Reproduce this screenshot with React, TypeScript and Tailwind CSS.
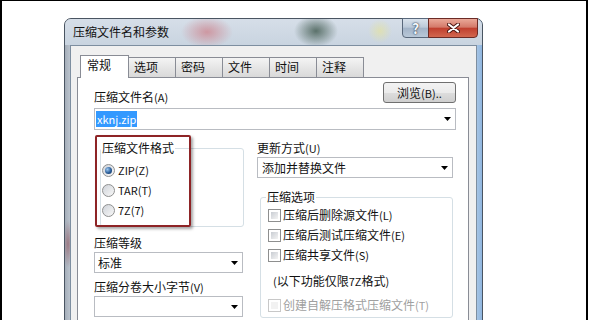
import React from 'react'

const TABS = ['选项', '密码', '文件', '时间', '注释']

// latin runs are a touch smaller than the CJK glyphs in this dialog font
function L({ children }: { children: React.ReactNode }) {
  return <span className="text-[11px]">{children}</span>
}

function Arrow() {
  return (
    <svg width="7" height="4" viewBox="0 0 7 4">
      <path d="M0 0h7L3.5 4z" fill="#000" />
    </svg>
  )
}

function Combo({ className, children }: { className: string; children?: React.ReactNode }) {
  return (
    <div className={`flex items-center border border-[#b9bcc2] bg-white pr-[4px] ${className}`}>
      <div className="flex-1 min-w-0 flex items-center">{children}</div>
      <Arrow />
    </div>
  )
}

function Radio({ checked }: { checked?: boolean }) {
  return (
    <div className="w-[13px] h-[13px] rounded-full border border-[#8e8f8f] bg-[linear-gradient(135deg,#cfd3d9,#f8f8f8)] flex items-center justify-center">
      {checked && (
        <div className="w-[7px] h-[7px] rounded-full bg-[radial-gradient(circle_at_35%_35%,#9cc8f2,#2a5d98_55%,#0f2e58)]" />
      )}
    </div>
  )
}

function Check({ disabled }: { disabled?: boolean }) {
  return (
    <div
      className={`w-[13px] h-[13px] border bg-white p-[2px] ${
        disabled ? 'border-[#c8c8c8]' : 'border-[#8e8f8f]'
      }`}
    >
      <div
        className={`h-full ${
          disabled ? 'bg-[#f2f2f2]' : 'bg-[linear-gradient(135deg,#c9cdd3,#f4f4f4)]'
        }`}
      />
    </div>
  )
}

const RADIOS: [React.ReactNode, boolean][] = [
  [<L>ZIP(Z)</L>, true],
  [<L>TAR(T)</L>, false],
  [<L>7Z(7)</L>, false],
]

const CHECKS: React.ReactNode[] = [
  <>压缩后删除源文件<L>(L)</L></>,
  <>压缩后测试压缩文件<L>(E)</L></>,
  <>压缩共享文件<L>(S)</L></>,
]

export default function App() {
  return (
    <div className="w-[591px] h-[320px] overflow-hidden bg-white text-[12px] text-[#111] font-['Noto_Sans_CJK_SC','Liberation_Sans',sans-serif]">
      <div className="w-[588px] h-[320px] border-l-2 border-t border-r-2 border-black">
        {/* window */}
        <div className="ml-[62px] mt-[17px] w-[419px] h-[420px] rounded-t-[7px] border border-[#4a5562] bg-[radial-gradient(ellipse_5px_24px_at_3px_225px,rgba(150,105,115,0.8),transparent),linear-gradient(90deg,#a5aeb9_0%,#bfc8d2_1.5%,#d3dbe4_50%,#aac7e6_98.5%,#90b6df_100%)]">
          {/* title bar */}
          <div className="flex h-[26px] rounded-t-[6px] bg-[radial-gradient(ellipse_26px_16px_at_142px_13px,rgba(205,140,150,0.85),transparent),radial-gradient(ellipse_22px_16px_at_251px_12px,rgba(70,95,85,0.85),transparent),radial-gradient(ellipse_12px_12px_at_315px_12px,rgba(225,225,170,0.8),transparent),linear-gradient(#d6dee8,#c9d4e0)]">
            <span className="pl-[8px] leading-[26px]">压缩文件名和参数</span>
            <div className="ml-auto mr-[4px] -mt-px flex h-[20px]">
              <div className="w-[27px] h-full rounded-bl-[4px] border border-[#59687b] bg-[linear-gradient(#d9e2ec,#bccad9_45%,#a3b4c8_52%,#b9c8d8)] flex items-center justify-center">
                <span className="text-[14px] font-bold leading-none text-[#f4f7fa] [text-shadow:0_0_2px_#2c3b4e,0_0_1px_#2c3b4e]">?</span>
              </div>
              <div className="-ml-px w-[50px] h-full rounded-br-[4px] border border-[#6b2b26] bg-[linear-gradient(#eaa898,#d47a6a_45%,#c0402f_52%,#d2674f)] flex items-center justify-center">
                <svg width="13" height="10" viewBox="0 0 13 10">
                  <path d="M2 1.5l9 7M11 1.5l-9 7" stroke="#4a1510" strokeWidth="4" strokeLinecap="round" />
                  <path d="M2 1.5l9 7M11 1.5l-9 7" stroke="#fff" strokeWidth="2.2" strokeLinecap="round" />
                </svg>
              </div>
            </div>
          </div>

          {/* client area */}
          <div className="mx-[5px] h-[400px] border border-[#7d8ea0] bg-[#f0f0f0] pl-[6px] pr-[7px] pt-[9px]">
            {/* tabs */}
            <div className="flex items-end h-[22px] pl-[3px]">
              <div className="relative z-10 -mb-px h-[23px] w-[49px] border border-b-0 border-[#898c95] bg-white pl-[6px] leading-[18px]">
                常规
              </div>
              {TABS.map((t) => (
                <div
                  key={t}
                  className="-ml-px h-[20px] w-[48px] border border-b-0 border-[#898c95] bg-[linear-gradient(#f4f4f4,#e6e6e6_50%,#d9d9d9)] pl-[5px] leading-[18px]"
                >
                  {t}
                </div>
              ))}
            </div>

            {/* tab panel */}
            <div className="h-[300px] border border-[#898c95] bg-white pl-[16px] pr-[12px] pt-[4px]">
              <div className="flex items-start h-[24px]">
                <span className="mt-[6px] leading-[18px]">压缩文件名<L>(A)</L></span>
                <button className="ml-auto h-[21px] w-[73px] rounded-[3px] border border-[#707070] bg-[linear-gradient(#f3f3f3,#ebebeb_50%,#dddddd_52%,#cfcfcf)] leading-[18px]">
                  浏览<L>(B)..</L>
                </button>
              </div>
              <Combo className="mt-[2px] h-[22px] w-full pl-[1px]">
                <span className="bg-[#3399ff] px-[1px] text-white text-[11px] leading-[16px]">xknj.zip</span>
              </Combo>

              <div className="flex gap-[13px]">
                {/* left column */}
                <div className="relative w-[150px]">
                  <div className="relative ml-[6px] mt-[18px] h-[79px] w-[144px] rounded-[3px] border border-[#d5dfe5] pt-[11px]">
                    <span className="absolute left-0 -top-[10px] bg-white px-[1px] leading-[18px]">压缩文件格式</span>
                    {RADIOS.map(([l, c], i) => (
                      <div key={i} className="flex h-[20px] items-center gap-[3px] pl-[1px]">
                        <Radio checked={c} />
                        <span className="leading-[18px]">{l}</span>
                      </div>
                    ))}
                  </div>
                  <div className="mt-[7px] leading-[18px]">压缩等级</div>
                  <Combo className="h-[21px] w-[149px] pl-[3px]">
                    <span className="leading-[18px]">标准</span>
                  </Combo>
                  <div className="mt-[5px] leading-[18px]">压缩分卷大小字节<L>(V)</L></div>
                  <Combo className="h-[21px] w-[149px]" />

                  {/* red annotation */}
                  <div className="absolute left-[1px] top-[5px] z-20 h-[92px] w-[96px] rounded-[2px] border-2 border-[#8e2426] shadow-[2px_2px_3px_rgba(0,0,0,0.35)]" />
                </div>

                {/* right column */}
                <div className="w-[196px]">
                  <div className="mt-[9px] leading-[18px]">更新方式<L>(U)</L></div>
                  <Combo className="h-[21px] w-full pl-[4px]">
                    <span className="leading-[18px]">添加并替换文件</span>
                  </Combo>
                  <div className="relative ml-[3px] mt-[19px] w-[193px] rounded-[3px] border border-[#d5dfe5] pt-[7px] pb-[2px]">
                    <span className="absolute left-[5px] -top-[10px] bg-white px-[1px] leading-[18px]">压缩选项</span>
                    {CHECKS.map((l, i) => (
                      <div key={i} className="flex h-[20px] items-center gap-[2px] pl-[7px]">
                        <Check />
                        <span className="leading-[18px]">{l}</span>
                      </div>
                    ))}
                    <div className="mt-[7px] pl-[12px] leading-[18px]">
                      <L>(</L>以下功能仅限<L>7Z</L>格式<L>)</L>
                    </div>
                    <div className="mt-[5px] flex h-[20px] items-center gap-[2px] pl-[7px] text-[#a0a0a0]">
                      <Check disabled />
                      <span className="leading-[18px]">创建自解压格式压缩文件<L>(T)</L></span>
                    </div>
                  </div>
                </div>
              </div>
            </div>
          </div>
        </div>
      </div>
    </div>
  )
}
